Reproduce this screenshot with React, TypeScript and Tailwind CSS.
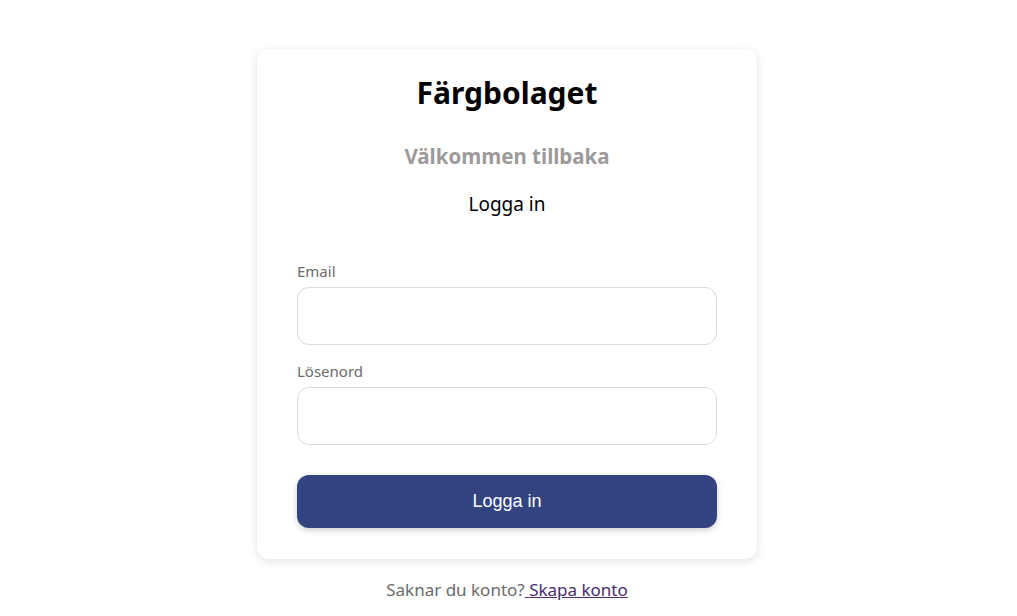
export default function App() {
  return (
    <div className="min-h-screen bg-white flex flex-col items-center pt-[49px] pr-[3px] font-['Noto_Sans',sans-serif]">
      <div className="w-[500px] bg-white rounded-xl shadow-[0_2px_10px_rgba(0,0,0,0.12)] px-10 pt-6 pb-[31px]">
        <h1 className="text-center text-[30px] leading-[40px] font-bold text-black">Färgbolaget</h1>
        <h2 className="mt-[29px] text-center text-[20.5px] leading-[28px] font-bold text-[#9e9a9a]">
          Välkommen tillbaka
        </h2>
        <p className="mt-5 text-center text-[19px] leading-[28px] text-black">Logga in</p>

        <form className="mt-[43px] flex flex-col" onSubmit={(e) => e.preventDefault()}>
          <label className="text-[15px] leading-5 text-[#6b6b6b]">Email</label>
          <input
            type="email"
            className="mt-1.5 h-[58px] w-full rounded-xl border border-[#d9d9d9] px-4 outline-none"
          />
          <label className="mt-4 text-[15px] leading-5 text-[#6b6b6b]">Lösenord</label>
          <input
            type="password"
            className="mt-1.5 h-[58px] w-full rounded-xl border border-[#d9d9d9] px-4 outline-none"
          />
          <button
            type="submit"
            className="mt-[30px] h-[53px] w-full rounded-xl bg-[#324380] text-white text-[18px] font-['Liberation_Sans',Arial,sans-serif] shadow-[0_2px_6px_rgba(0,0,0,0.2)]"
          >
            Logga in
          </button>
        </form>
      </div>

      <p className="mt-[19px] text-[17px] leading-6 text-[#6b6b6b]">
        Saknar du konto?
        <a href="#" className="text-[#4b2a6e] underline">
          {' '}Skapa konto
        </a>
      </p>
    </div>
  );
}
